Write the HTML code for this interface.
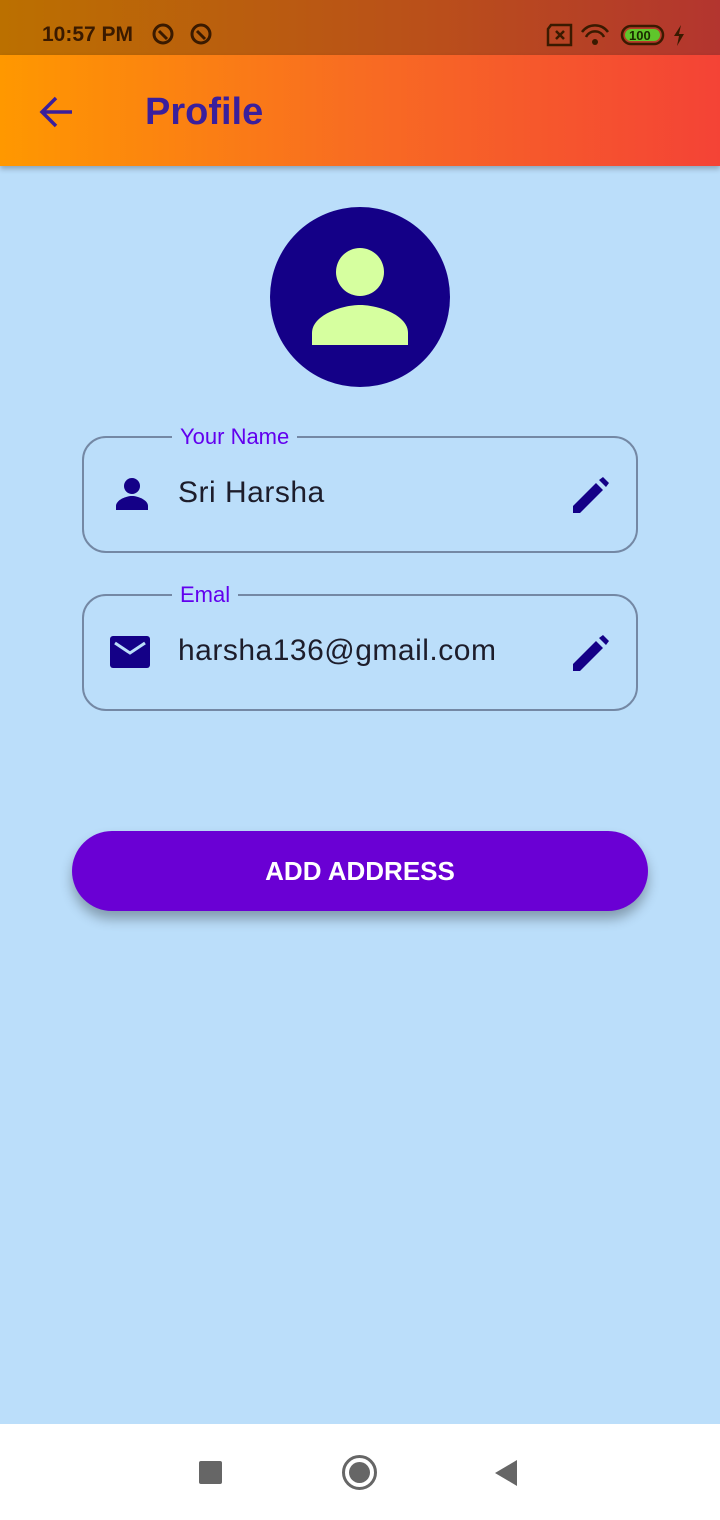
<!DOCTYPE html>
<html><head><style>
*{margin:0;padding:0;box-sizing:border-box}
body{width:720px;height:1520px;background:#bbdefa;font-family:"Liberation Sans",sans-serif;position:relative;overflow:hidden}
.status{position:absolute;top:0;left:0;width:720px;height:55px;background:linear-gradient(90deg,#bb7000,#ba4f1a 60%,#b3352f)}
.bar{position:absolute;top:55px;left:0;width:720px;height:111px;background:linear-gradient(90deg,#ff9800,#f86c22 50%,#f44336);box-shadow:0 3px 5px rgba(0,0,0,.25)}
.field{position:absolute;left:82px;width:556px;height:117px;border:2px solid #7488a4;border-radius:24px}
.lbl{position:absolute;top:-14px;left:88px;background:#bbdefa;padding:0 8px;color:#6200ee;font-size:22px}
.val{position:absolute;left:94px;top:38px;font-size:30px;letter-spacing:0.5px;color:#1d1d2b;white-space:nowrap;overflow:hidden;width:318px}
.nav{position:absolute;top:1424px;left:0;width:720px;height:96px;background:#fff}
</style></head><body>
<div class="status">
<div style="position:absolute;left:42px;top:23px;font-size:21px;font-weight:bold;color:#3a1a00">10:57 PM</div>
<svg style="position:absolute;left:152px;top:22px" width="64" height="24"><g fill="none" stroke="#3a1a00" stroke-width="3"><circle cx="11" cy="12" r="9"/><circle cx="49" cy="12" r="9"/><path d="M7 9l8 8M45 9l8 8"/></g></svg>
<svg style="position:absolute;left:545px;top:22px" width="145" height="26"><g fill="none" stroke="#3a1a00" stroke-width="2.5"><path d="M6 3h20v20H3V7z"/><path d="M11 9l8 8M19 9l-8 8"/><path d="M37 10a16 16 0 0 1 26 0M41 15a10 10 0 0 1 18 0"/><rect x="77" y="4" width="41" height="18" rx="9"/></g><circle cx="50" cy="20" r="3" fill="#3a1a00"/><rect x="80" y="7" width="35" height="12" rx="6" fill="#5fc62b"/><text x="84" y="18" font-size="13" font-weight="bold" fill="#1a2a00" font-family="Liberation Sans">100</text><path d="M136 3l-7 11h5l-2 10 7-12h-5z" fill="#3a1a00"/></svg>
</div>
<div class="bar">
<svg style="position:absolute;left:38px;top:39px" width="36" height="36"><path d="M34 18H6M18 4L4 18l14 14" fill="none" stroke="#3a1f9c" stroke-width="3.5"/></svg>
<div style="position:absolute;left:145px;top:36px;font-size:38px;font-weight:bold;color:#3a1f9c">Profile</div>
</div>
<div style="position:absolute;left:270px;top:207px;width:180px;height:180px;border-radius:50%;background:#140087">
<svg width="180" height="180"><circle cx="90" cy="65" r="24" fill="#d6ff9f"/><path d="M42 138v-12c0-18 30-28 48-28s48 10 48 28v12z" fill="#d6ff9f"/></svg>
</div>
<div class="field" style="top:436px"><div class="lbl">Your Name</div>
<svg style="position:absolute;left:30px;top:38px" width="36" height="36"><circle cx="18" cy="10" r="8" fill="#140087"/><path d="M2 34v-4c0-6 10-10 16-10s16 4 16 10v4z" fill="#140087"/></svg>
<div class="val">Sri Harsha</div>
<svg style="position:absolute;left:489px;top:39px" width="36" height="36"><path d="M0 36v-7l23-23 7 7-23 23zM26 3l4-3 6 6-3 4z" fill="#140087"/></svg>
</div>
<div class="field" style="top:594px"><div class="lbl">Emal</div>
<svg style="position:absolute;left:26px;top:40px" width="40" height="34"><rect x="0" y="0" width="40" height="32" rx="3" fill="#140087"/><path d="M5 7l15 10 15-10" fill="none" stroke="#bbdefa" stroke-width="3"/></svg>
<div class="val">harsha136@gmail.com</div>
<svg style="position:absolute;left:489px;top:39px" width="36" height="36"><path d="M0 36v-7l23-23 7 7-23 23zM26 3l4-3 6 6-3 4z" fill="#140087"/></svg>
</div>
<div style="position:absolute;left:72px;top:831px;width:576px;height:80px;border-radius:40px;background:#6a00d4;box-shadow:0 8px 12px rgba(0,0,0,.3);color:#fff;font-size:26px;font-weight:bold;text-align:center;line-height:80px">ADD ADDRESS</div>
<div class="nav">
<div style="position:absolute;left:199px;top:37px;width:23px;height:23px;background:#666;border-radius:2px"></div>
<div style="position:absolute;left:342px;top:31px;width:35px;height:35px;border:3px solid #666;border-radius:50%"><div style="margin:4px;width:21px;height:21px;background:#666;border-radius:50%"></div></div>
<svg style="position:absolute;left:493px;top:35px" width="26" height="28"><path d="M24 1v26L2 14z" fill="#666"/></svg>
</div>
</body></html>
